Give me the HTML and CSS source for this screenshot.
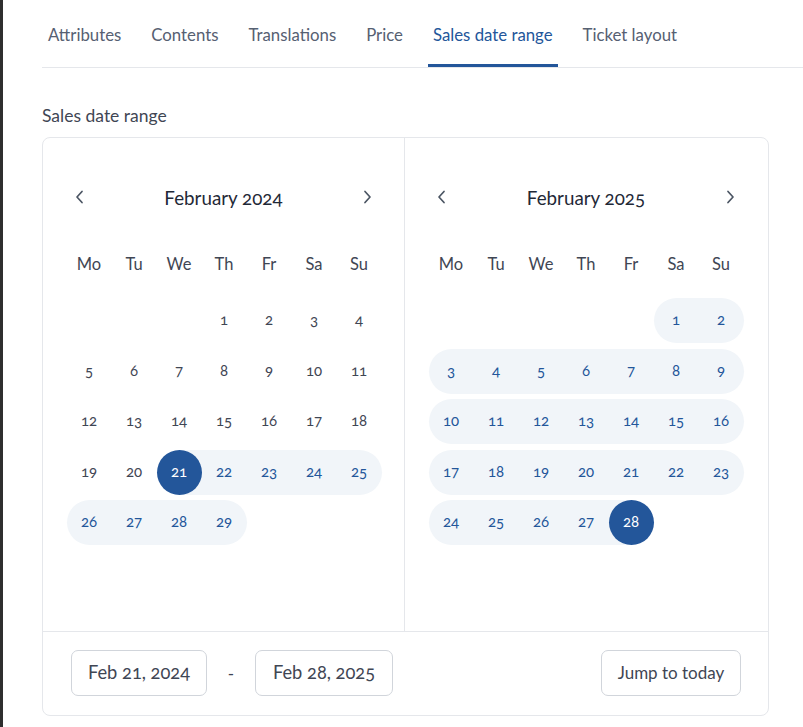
FILE: index.html
```html
<!DOCTYPE html>
<html>
<head>
<meta charset="utf-8">
<link rel="stylesheet" href="styles.css">
</head>
<body>
<div class="page">
  <div class="edge"></div>
  <main class="main">
    <nav class="tabs">
      <a class="tab">Attributes</a>
      <a class="tab">Contents</a>
      <a class="tab">Translations</a>
      <a class="tab">Price</a>
      <a class="tab active">Sales date range</a>
      <a class="tab">Ticket layout</a>
    </nav>
    <div class="label">Sales date range</div>
    <section class="card">
      <div class="cals">
        <div class="cal">
          <div class="cal-head">
            <button class="arrow"><svg width="10" height="14" viewBox="0 0 10 14"><path d="M7 1.5 L2 7 L7 12.5" fill="none" stroke="#4b5563" stroke-width="1.7" stroke-linecap="round" stroke-linejoin="round"/></svg></button>
            <div class="title">February 2024</div>
            <button class="arrow"><svg width="10" height="14" viewBox="0 0 10 14"><path d="M3 1.5 L8 7 L3 12.5" fill="none" stroke="#4b5563" stroke-width="1.7" stroke-linecap="round" stroke-linejoin="round"/></svg></button>
          </div>
          <div class="weekdays"><span>Mo</span><span>Tu</span><span>We</span><span>Th</span><span>Fr</span><span>Sa</span><span>Su</span></div>
          <div class="days">
            <span></span><span></span><span></span>
            <span class="d">1</span><span class="d">2</span><span class="d">3</span><span class="d">4</span>
            <span class="d">5</span><span class="d">6</span><span class="d">7</span><span class="d">8</span><span class="d">9</span><span class="d">10</span><span class="d">11</span>
            <span class="d">12</span><span class="d">13</span><span class="d">14</span><span class="d">15</span><span class="d">16</span><span class="d">17</span><span class="d">18</span>
            <span class="d">19</span><span class="d">20</span><span class="d sel start"><b>21</b></span><span class="d r">22</span><span class="d r">23</span><span class="d r">24</span><span class="d r re">25</span>
            <span class="d r rs">26</span><span class="d r">27</span><span class="d r">28</span><span class="d r re">29</span>
          </div>
        </div>
        <div class="cal cal-right">
          <div class="cal-head">
            <button class="arrow"><svg width="10" height="14" viewBox="0 0 10 14"><path d="M7 1.5 L2 7 L7 12.5" fill="none" stroke="#4b5563" stroke-width="1.7" stroke-linecap="round" stroke-linejoin="round"/></svg></button>
            <div class="title">February 2025</div>
            <button class="arrow"><svg width="10" height="14" viewBox="0 0 10 14"><path d="M3 1.5 L8 7 L3 12.5" fill="none" stroke="#4b5563" stroke-width="1.7" stroke-linecap="round" stroke-linejoin="round"/></svg></button>
          </div>
          <div class="weekdays"><span>Mo</span><span>Tu</span><span>We</span><span>Th</span><span>Fr</span><span>Sa</span><span>Su</span></div>
          <div class="days">
            <span></span><span></span><span></span><span></span><span></span>
            <span class="d r rs">1</span><span class="d r re">2</span>
            <span class="d r rs">3</span><span class="d r">4</span><span class="d r">5</span><span class="d r">6</span><span class="d r">7</span><span class="d r">8</span><span class="d r re">9</span>
            <span class="d r rs">10</span><span class="d r">11</span><span class="d r">12</span><span class="d r">13</span><span class="d r">14</span><span class="d r">15</span><span class="d r re">16</span>
            <span class="d r rs">17</span><span class="d r">18</span><span class="d r">19</span><span class="d r">20</span><span class="d r">21</span><span class="d r">22</span><span class="d r re">23</span>
            <span class="d r rs">24</span><span class="d r">25</span><span class="d r">26</span><span class="d r">27</span><span class="d sel end"><b>28</b></span>
          </div>
        </div>
      </div>
      <div class="footer">
        <div class="inputs">
          <div class="field">Feb 21, 2024</div>
          <span class="dash">-</span>
          <div class="field">Feb 28, 2025</div>
        </div>
        <button class="today">Jump to today</button>
      </div>
    </section>
  </main>
</div>
</body>
</html>
```

FILE: styles.css
```css
* { box-sizing: border-box; }
html, body { margin: 0; padding: 0; background: #ffffff; }
body {
  font-family: "Lato", "Open Sans", sans-serif;
  color: #3f4654;
  font-variant-numeric: oldstyle-nums;
}
.page { display: flex; min-height: 727px; }
.edge { width: 3px; background: #2e2e2e; flex: none; }
.main { flex: 1; padding-left: 39px; overflow: hidden; }

.tabs {
  display: flex;
  gap: 20px;
  border-bottom: 1px solid #e5e7eb;
  padding-left: 1px;
}
.tab {
  display: block;
  padding: 23px 5px 17px;
  font-size: 16.8px;
  line-height: 24px;
  color: #566072;
  border-bottom: 3px solid transparent;
  white-space: nowrap;
}
.tab.active { color: #23569a; border-bottom-color: #23569a; }

.label {
  margin-top: 36px;
  font-size: 17.5px;
  line-height: 24px;
  color: #3f4654;
}

.card {
  margin-top: 9px;
  width: 727px;
  border: 1px solid #e5e7eb;
  border-radius: 8px;
}
.cals { display: flex; height: 493px; }
.cal {
  width: 362px;
  padding: 39px 23.5px 0;
  border-right: 1px solid #e5e7eb;
}
.cal-right { border-right: none; }

.cal-head {
  display: flex;
  align-items: center;
  justify-content: space-between;
  height: 40px;
}
.arrow {
  width: 27px;
  height: 27px;
  border: 0;
  background: none;
  padding: 0;
  display: flex;
  align-items: center;
  justify-content: center;
}
.title { font-size: 18.8px; color: #1f2937; }

.weekdays {
  display: grid;
  grid-template-columns: repeat(7, 45px);
  margin-top: 35px;
  height: 24px;
  line-height: 24px;
  font-size: 16.5px;
  color: #3f4654;
  text-align: center;
}

.days {
  display: grid;
  grid-template-columns: repeat(7, 45px);
  grid-auto-rows: 45px;
  row-gap: 5.5px;
  margin-top: 22px;
  font-size: 15px;
  text-align: center;
}
.d {
  display: flex;
  align-items: center;
  justify-content: center;
  color: #3f4654;
  padding-bottom: 3px;
}
.d.r { background: #f1f5f9; color: #23569a; }
.d.rs { border-radius: 22.5px 0 0 22.5px; }
.d.re { border-radius: 0 22.5px 22.5px 0; }
.d.rs.re { border-radius: 22.5px; }
.d.sel { padding-bottom: 0; }
.d.sel b {
  font-weight: 400;
  width: 45px;
  height: 45px;
  padding-bottom: 3px;
  border-radius: 50%;
  background: #23569a;
  color: #ffffff;
  display: flex;
  align-items: center;
  justify-content: center;
}
.d.start { background: linear-gradient(to right, transparent 50%, #f1f5f9 50%); }
.d.end { background: linear-gradient(to right, #f1f5f9 50%, transparent 50%); }

.footer {
  border-top: 1px solid #e5e7eb;
  display: flex;
  align-items: center;
  justify-content: space-between;
  padding: 18px 27px 19px 28px;
}
.inputs { display: flex; align-items: center; gap: 20px; }
.field, .today {
  height: 46px;
  border: 1px solid #d1d5db;
  border-radius: 7px;
  padding: 0 10px 2px;
  display: flex;
  align-items: center;
  font-size: 18.3px;
  color: #3f4654;
  background: #fff;
  font-family: inherit;
}
.field { width: 136px; justify-content: center; }
.field + .dash + .field { width: 138px; }
.dash { font-size: 17px; width: 8px; text-align: center; }
.today { width: 140px; justify-content: center; font-size: 17px; }
```
